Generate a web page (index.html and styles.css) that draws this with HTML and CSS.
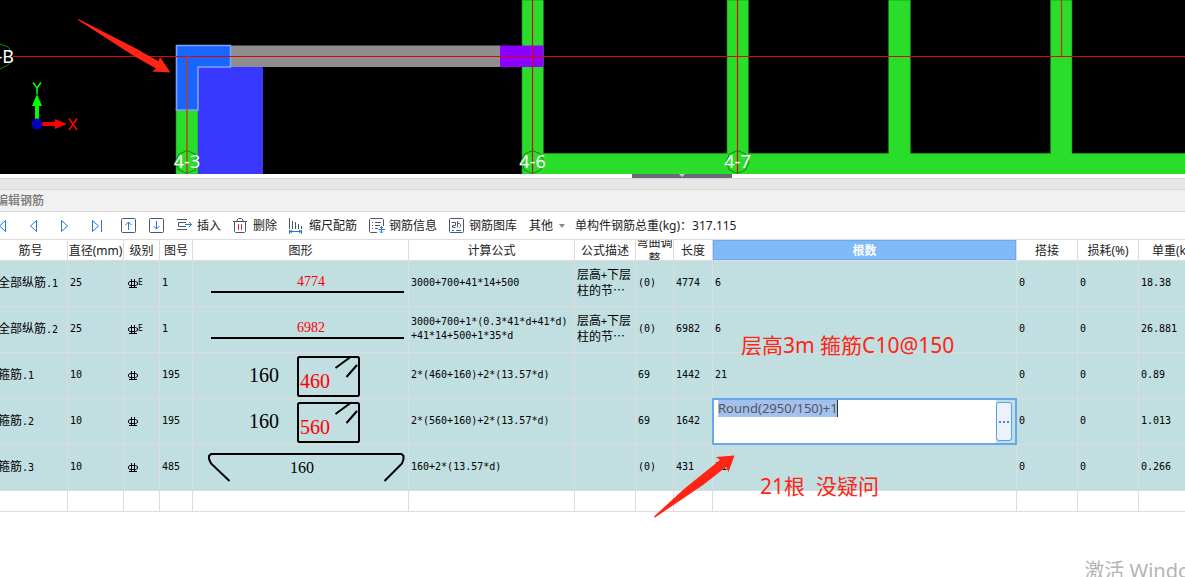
FILE: index.html
```html
<!DOCTYPE html>
<html lang="zh-CN">
<head>
<meta charset="utf-8">
<title>编辑钢筋</title>
<link rel="stylesheet" href="styles.css">
</head>
<body>
<main class="app">
  <section class="viewport" aria-label="平面图">
    <svg class="plan" viewBox="0 0 1185 174" preserveAspectRatio="xMinYMin slice">
      <rect width="1185" height="174" fill="#000"/>
      <g fill="#2bdd2b" stroke="#187c18" stroke-width="0.6">
        <path d="M522 0H543.500V153.300H727V0H748.500V153.300H888.500V0H910.500V153.300H1050.500V0H1072V153.300H1186V175H522Z"/>
        <rect x="176" y="108" width="22" height="67"/>
      </g>
      <rect x="198" y="66" width="65" height="108" fill="#3838ff"/>
      <rect x="230" y="45.500" width="270" height="21.500" fill="#8e8e8e"/>
      <rect x="500" y="45.500" width="43.500" height="21.500" fill="#8b00ff"/>
      <path d="M176.500 45.500H230.500V67H198V110H176.500Z" fill="#1966ff" stroke="#7ba5fa" stroke-width="1.600"/>
      <g fill="none" stroke="#e00505" stroke-width="1.200">
        <path d="M13 56.500H1185M532.500 0V174M737.500 0V174"/>
        <path d="M187 56V174M1061.500 0V56" stroke="#c23a18" stroke-width="1.400"/>
      </g>
      <g fill="none" stroke="#0a8a0a">
        <path id="axis" d="M187 150.500L195 154L198.500 162L195 170L187 173.500L179 170L175.500 162L179 154Z"/>
        <use href="#axis" x="345.500"/>
        <use href="#axis" x="550.500"/>
        <path d="M0 44L8 47L12 53M12 60L8 65L0 69"/>
      </g>
      <g class="axis-label">
        <text x="187" y="168" text-anchor="middle">4-3</text>
        <text x="532.500" y="168" text-anchor="middle">4-6</text>
        <text x="737.500" y="168" text-anchor="middle">4-7</text>
        <text x="14" y="63" text-anchor="end">4-B</text>
      </g>
      <path d="M37 122V103" stroke="#0f0" stroke-width="4"/><path d="M37 94L42 106H32Z" fill="#0f0"/>
      <path d="M40 124H56" stroke="#f00" stroke-width="4"/><path d="M67 124L55 129V119Z" fill="#f00"/>
      <circle cx="37" cy="124" r="5.500" fill="#0000bf"/>
      <path d="M33 82.500L37 88L41 82.500M37 88V94" fill="none" stroke="#0f0" stroke-width="1.600"/>
      <path d="M69 118.500L77 130M77 118.500L69 130" fill="none" stroke="#f00" stroke-width="1.600"/>
      <path d="M78.500 19L135 48L158.500 61.300L160 57L170.500 72.500L152 71.600L156 68.500L134 56L78 20Z" fill="#ff2414"/>
    </svg>
  </section>
  <div class="splitter"><button class="grip" aria-label="收起"><svg width="8" height="3" viewBox="0 0 8 3"><path d="M1 0H7L4 3Z" fill="#c9ccd1"/></svg></button></div>
  <div class="band"></div>

  <section class="panel">
    <h1 class="title">编辑钢筋</h1>
    <div class="toolbar">
      <div class="nav">
        <button aria-label="首条"><svg class="icon blue" viewBox="0 0 16 16"><path d="M1.500 2V14M10.500 2.500V13.500L4.500 8Z"/></svg></button>
        <button aria-label="上一条"><svg class="icon blue" viewBox="0 0 16 16"><path d="M10.500 2.500V13.500L4.500 8Z"/></svg></button>
        <button aria-label="下一条"><svg class="icon blue" viewBox="0 0 16 16"><path d="M4.500 2.500V13.500L10.500 8Z"/></svg></button>
        <button aria-label="末条"><svg class="icon blue" viewBox="0 0 16 16"><path d="M4.500 2.500V13.500L10.500 8ZM13.500 2V14"/></svg></button>
      </div>
      <button aria-label="上移"><svg class="icon" viewBox="0 0 16 16"><rect x="0.500" y="0.500" width="14" height="14" rx="1"/><path class="b" d="M7.500 12V4M4.500 7L7.500 4L10.500 7"/></svg></button>
      <button aria-label="下移"><svg class="icon" viewBox="0 0 16 16"><rect x="0.500" y="0.500" width="14" height="14" rx="1"/><path class="b" d="M7.500 3V11M4.500 8L7.500 11L10.500 8"/></svg></button>
      <button><svg class="icon" viewBox="0 0 16 16"><path d="M0 1.500H10M0 11.500H10M9 4.500H1.500V8.500H9"/><path class="b" d="M8 6.500H14.500M12 4L14.500 6.500L12 9"/></svg>插入</button>
      <button><svg class="icon" viewBox="0 0 16 16"><path d="M0 3.500H14M4 3.500V2L5.500 0.500H8.500L10 2V3.500M1.500 3.500V13.500L2.500 14.500H11.500L12.500 13.500V3.500"/><path d="M5.500 6V12M8.500 6V12" stroke="#e02a32"/></svg>删除</button>
      <button><svg class="icon" viewBox="0 0 16 16"><path d="M0.500 0V11M3.500 3V11M6.500 4V11M9.500 6V11M12.500 8V11"/><path class="b" d="M0.500 12V16M12.500 12V16M1 13.500H12M3 12L1 13.500L3 15M10 12L12 13.500L10 15"/></svg>缩尺配筋</button>
      <button><svg class="icon" viewBox="0 0 16 16"><path d="M14.500 8V1.500L13.500 0.500H1.500L0.500 1.500V13.500L1.500 14.500H8M3 4.500H4M6 4.500H12M3 7.500H4M6 7.500H11M3 10.500H4M6 10.500H9"/><path class="b" d="M12.500 8.500V15M9.500 11.500H16M11 10L12.500 8.500L14 10M11 13.500L12.500 15L14 13.500"/></svg>钢筋信息</button>
      <button><svg class="icon" viewBox="0 0 16 16"><rect x="0.500" y="0.500" width="14" height="14" rx="1"/><path d="M2.500 4.500H6.500V7.500H3.500V9.500H6.500M8.500 3V9.500M8.500 5.500H10.500L11.500 6.500V8.500L10.500 9.500"/><path class="b" d="M3 12.500H5M7 12.500H12"/></svg>钢筋图库</button>
      <button class="more">其他<svg width="6" height="4" viewBox="0 0 6 4"><path d="M0 0H6L3 4Z" fill="#8a8a8a"/></svg></button>
      <span class="total">单构件钢筋总重(kg)：317.115</span>
    </div>

    <div class="grid-wrap">
      <table class="grid">
        <colgroup><col class="w-name"><col class="w-dia"><col class="w-lvl"><col class="w-no"><col class="w-fig"><col class="w-formula"><col class="w-std"><col class="w-bend"><col class="w-len"><col class="w-count"><col class="w-std"><col class="w-std"><col class="w-weight"></colgroup>
        <thead><tr>
          <th><div>筋号</div></th><th><div>直径(mm)</div></th><th><div>级别</div></th><th><div>图号</div></th><th><div>图形</div></th><th><div>计算公式</div></th><th><div>公式描述</div></th><th><div>弯曲调整</div></th><th><div>长度</div></th><th class="active"><div>根数</div></th><th><div>搭接</div></th><th><div>损耗(%)</div></th><th><div>单重(kg)</div></th>
        </tr></thead>
        <tbody>
          <tr>
            <td class="cjk">全部纵筋<span>.1</span></td><td>25</td>
            <td><svg class="rebar" viewBox="0 0 10 10"><use href="#rebar"/></svg><sup>E</sup></td><td>1</td>
            <td class="fig"><svg viewBox="0 0 215 45"><path d="M18 31H211"/><text class="red s" x="104" y="25">4774</text></svg></td>
            <td>3000+700+41*14+500</td><td class="cjk desc">层高<span>+</span>下层<br>柱的节⋯</td><td>(0)</td><td>4774</td><td>6</td><td>0</td><td>0</td><td>18.38</td>
          </tr>
          <tr>
            <td class="cjk">全部纵筋<span>.2</span></td><td>25</td>
            <td><svg class="rebar" viewBox="0 0 10 10"><use href="#rebar"/></svg><sup>E</sup></td><td>1</td>
            <td class="fig"><svg viewBox="0 0 215 45"><path d="M18 31H211"/><text class="red s" x="104" y="25">6982</text></svg></td>
            <td>3000+700+1*(0.3*41*d+41*d)<br>+41*14+500+1*35*d</td><td class="cjk desc">层高<span>+</span>下层<br>柱的节⋯</td><td>(0)</td><td>6982</td><td>6</td><td>0</td><td>0</td><td>26.881</td>
          </tr>
          <tr>
            <td class="cjk">箍筋<span>.1</span></td><td>10</td>
            <td><svg class="rebar" viewBox="0 0 10 10"><g id="rebar" fill="none" stroke="#000"><path d="M2 2.500H7.500L9.500 3.500V5.500L7.500 6.500H2L0.500 5.500V3.500ZM3.500 0V9M6.500 0V9M1 8.500H9"/></g></svg></td><td>195</td>
            <td class="fig"><svg viewBox="0 0 215 45"><path d="M106 4H165L166 5V42L165 43H106L105 42V5ZM142.500 15L157.500 4M153.500 24L164 12"/><text x="56" y="29">160</text><text class="red" x="107" y="35">460</text></svg></td>
            <td>2*(460+160)+2*(13.57*d)</td><td></td><td>69</td><td>1442</td><td>21</td><td>0</td><td>0</td><td>0.89</td>
          </tr>
          <tr>
            <td class="cjk">箍筋<span>.2</span></td><td>10</td>
            <td><svg class="rebar" viewBox="0 0 10 10"><use href="#rebar"/></svg></td><td>195</td>
            <td class="fig"><svg viewBox="0 0 215 45"><path d="M106 4H165L166 5V42L165 43H106L105 42V5ZM142.500 15L157.500 4M153.500 24L164 12"/><text x="56" y="29">160</text><text class="red" x="107" y="35">560</text></svg></td>
            <td>2*(560+160)+2*(13.57*d)</td><td></td><td>69</td><td>1642</td>
            <td class="edit-cell"><div class="editor"><div class="field"><input type="text" aria-label="根数" value="Round(2950/150)+1"></div><button aria-label="更多"><svg width="12" height="2" viewBox="0 0 12 2"><path d="M1 0h2v2h-2zM5 0h2v2h-2zM9 0h2v2h-2z" fill="#3f8ae0"/></svg></button></div></td>
            <td>0</td><td>0</td><td>1.013</td>
          </tr>
          <tr>
            <td class="cjk">箍筋<span>.3</span></td><td>10</td>
            <td><svg class="rebar" viewBox="0 0 10 10"><use href="#rebar"/></svg></td><td>485</td>
            <td class="fig"><svg viewBox="0 0 215 45"><path d="M36.500 36L18 18.500L16 14V11L18 9H208.500L210.500 11V14L209 18.500L191.500 36"/><text class="m" x="97" y="28">160</text></svg></td>
            <td>160+2*(13.57*d)</td><td></td><td>(0)</td><td>431</td><td>21</td><td>0</td><td>0</td><td>0.266</td>
          </tr>
          <tr class="blank"><td></td><td></td><td></td><td></td><td></td><td></td><td></td><td></td><td></td><td></td><td></td><td></td><td></td></tr>
        </tbody>
      </table>
      <p class="note note-top">层高3m 箍筋C10@150</p>
      <p class="note note-bottom">21根&nbsp; 没疑问</p>
      <svg class="arrow" width="82" height="64" viewBox="0 0 82 64"><path d="M0 61.500L30 34L66 5L62 2L80.500 0.500L74.500 17L72 12L49 30L1 62.500Z" fill="#ff2414"/></svg>
    </div>
  </section>
  <p class="watermark">激活 Windows</p>
</main>
</body>
</html>
```
FILE: styles.css
```css
* { box-sizing: border-box; }

body {
  margin: 0;
  background: #fff;
  color: #222;
  font: 12px/16px "Noto Sans", "Noto Sans CJK SC", sans-serif;
}

.app {
  position: relative;
  min-height: 100vh;
  overflow: hidden;
}

button {
  margin: 0;
  padding: 0;
  border: 0;
  background: none;
  color: inherit;
  font: inherit;
}

svg { display: block; }

.viewport { background: #000; }
.plan { width: 100%; height: 174px; }
.axis-label { fill: #fff; font-size: 18px; }

.splitter { display: flex; height: 4px; background: #fff; }
.grip {
  display: flex;
  justify-content: center;
  width: 100px;
  height: 4px;
  margin-left: 632px;
  background: #656d78;
}

.band {
  height: 11px;
  border-top: 1px solid #d6d6d6;
  background: #e7e7e7;
}

.panel { margin-left: -6px; }

.title {
  height: 23px;
  margin: 0;
  padding: 0 2px;
  border: solid #d9d9d9;
  border-width: 1px 0;
  background: #f1f1f1;
  color: #777;
  font-size: 12px;
  font-weight: 500;
  line-height: 22px;
}

.toolbar {
  display: flex;
  align-items: center;
  gap: 12px;
  height: 27px;
  padding-left: 1px;
  line-height: 18px;
  white-space: nowrap;
}
.toolbar button { display: flex; align-items: center; gap: 4px; }
.toolbar .nav { display: flex; gap: 15px; margin-right: 5px; }
.toolbar .more { gap: 6px; }
.total { margin-left: -2px; }

.icon {
  width: 16px;
  height: 16px;
  fill: none;
  stroke: #50566a;
}
.icon.blue, .icon .b { stroke: #1f78e0; }

.grid-wrap { position: relative; }

.grid {
  width: 100%;
  min-width: 1217px;
  border-top: 1px solid #dcdcdc;
  border-spacing: 0;
  table-layout: fixed;
}

.w-name { width: 74px; }
.w-dia { width: 56px; }
.w-lvl { width: 36px; }
.w-no { width: 33px; }
.w-fig { width: 216px; }
.w-formula { width: 166px; }
.w-std { width: 61px; }
.w-bend { width: 38px; }
.w-len { width: 39px; }
.w-count { width: 304px; }

th, td {
  padding: 0;
  border: solid #dcdcdc;
  border-width: 0 1px 1px 0;
}

th { font-weight: 400; }
th div {
  display: flex;
  align-items: center;
  justify-content: center;
  height: 20px;
  padding-top: 2px;
  overflow: hidden;
}
th.active {
  background: #80baf9;
  color: #fff;
  font-weight: 700;
  box-shadow: inset 0 0 0 1px #6aaaf0;
}

td {
  height: 46px;
  padding: 0 2px 1px;
  background: #c1dee0;
  color: #000;
  font: 10px/14px "DejaVu Sans Mono", monospace;
  white-space: nowrap;
}
td.cjk { font: 12px/14px "Noto Sans CJK SC", sans-serif; }
td.cjk:first-child { padding-left: 4px; }
td.cjk span { font: 10px/14px "DejaVu Sans Mono", monospace; }
td.desc { padding-bottom: 3px; }
td.fig { padding: 0; }
.blank td { height: 21px; background: #fff; }

.fig svg {
  width: 215px;
  height: 45px;
  fill: none;
  stroke: #000;
  stroke-width: 2;
}
.fig text {
  fill: #000;
  stroke: none;
  font: 20px "Liberation Serif", serif;
}
.fig .red { fill: #f00; }
.fig .s { font-size: 14px; }
.fig .m { font-size: 16px; }

.rebar {
  display: inline-block;
  width: 10px;
  height: 10px;
  margin-left: 2px;
  vertical-align: -3px;
}
sup { font-size: 8px; line-height: 8px; vertical-align: 1px; }

td.edit-cell { position: relative; padding: 0; }
.editor {
  position: absolute;
  inset: -1px;
  display: flex;
  padding-right: 3px;
  border: 2px solid #67a8ea;
  background: #c1dee0;
}
.field { flex: 1; background: #fff; }
.field input {
  display: block;
  width: 120px;
  height: 17px;
  margin-left: 4px;
  padding: 0;
  border: 0;
  border-right: 1px solid #333;
  background: #a3c1ee;
  color: #555;
  font: 13px/17px "Noto Sans", sans-serif;
}
.editor button {
  display: flex;
  align-items: center;
  justify-content: center;
  width: 16px;
  margin: 2px 0;
  border: 1px solid #55a0e8;
  border-radius: 3px;
  background: #edf1fa;
}

.note {
  position: absolute;
  margin: 0;
  color: #ff2414;
  font-size: 21px;
  line-height: 28px;
  white-space: nowrap;
}
.note-top { left: 747px; top: 92px; }
.note-bottom { left: 766px; top: 233px; }
.arrow { position: absolute; left: 660px; top: 216px; }

.watermark {
  position: absolute;
  right: -30px;
  bottom: -6px;
  margin: 0;
  color: #b4b4b4;
  font-size: 20px;
  line-height: 24px;
}
```
